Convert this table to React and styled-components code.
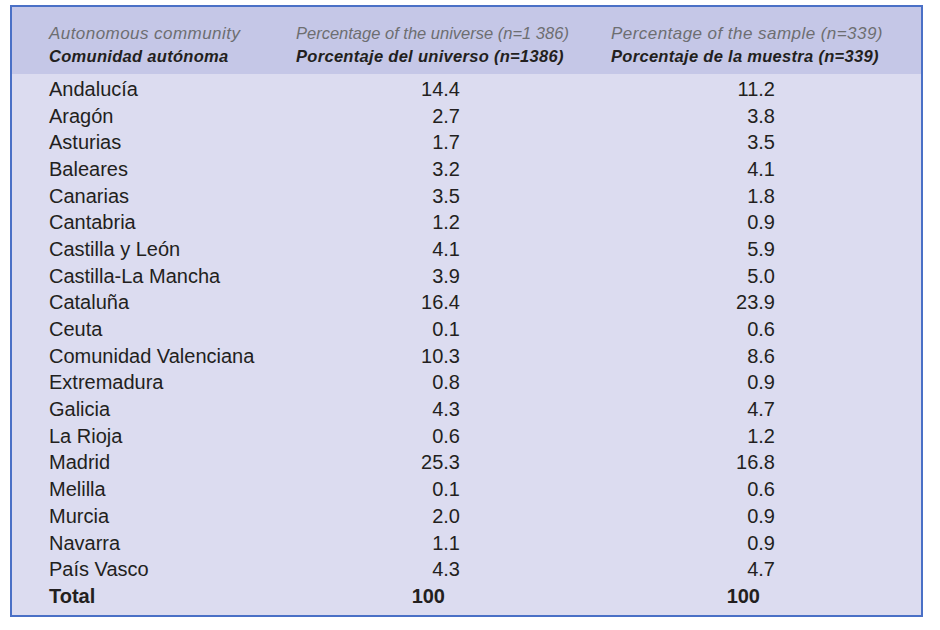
import React from 'react';
import styled, { createGlobalStyle } from 'styled-components';

const rows = [
  ['Andalucía', '14.4', '11.2'],
  ['Aragón', '2.7', '3.8'],
  ['Asturias', '1.7', '3.5'],
  ['Baleares', '3.2', '4.1'],
  ['Canarias', '3.5', '1.8'],
  ['Cantabria', '1.2', '0.9'],
  ['Castilla y León', '4.1', '5.9'],
  ['Castilla-La Mancha', '3.9', '5.0'],
  ['Cataluña', '16.4', '23.9'],
  ['Ceuta', '0.1', '0.6'],
  ['Comunidad Valenciana', '10.3', '8.6'],
  ['Extremadura', '0.8', '0.9'],
  ['Galicia', '4.3', '4.7'],
  ['La Rioja', '0.6', '1.2'],
  ['Madrid', '25.3', '16.8'],
  ['Melilla', '0.1', '0.6'],
  ['Murcia', '2.0', '0.9'],
  ['Navarra', '1.1', '0.9'],
  ['País Vasco', '4.3', '4.7'],
];

const GlobalStyle = createGlobalStyle`
  body {
    margin: 0;
    background: #ffffff;
    font-family: "Liberation Sans", Arial, sans-serif;
  }
`;

const Frame = styled.div`
  margin: 5px 0 0 10px;
  width: 909px;
  border: 2px solid #4a70c6;
  background: #dcdcf0;
`;

const Grid = styled.div`
  display: grid;
  grid-template-columns: 247px 315px 1fr;
  padding-left: 37px;
`;

const Header = styled(Grid)`
  background: #c5c7e7;
  padding-top: 15px;
  padding-bottom: 6px;
`;

const HeadCell = styled.div`
  display: flex;
  flex-direction: column;
  line-height: 23px;
  font-style: italic;
  white-space: nowrap;
`;

/* the universe heading is set tighter than the other two */
const English = styled.span`
  color: #6d6e71;
  font-size: ${p => (p.$tight ? '16.5px' : '17px')};
  letter-spacing: ${p => (p.$tight ? '0' : '0.45px')};
`;

const Spanish = styled.span`
  color: #231f20;
  font-size: 16.5px;
  font-weight: bold;
  letter-spacing: 0.3px;
`;

const Body = styled.div`
  padding: 2px 0 5px;
`;

const Row = styled(Grid)`
  height: 26.7px;
  align-items: center;
  font-size: 20px;
  color: #231f20;
  font-weight: ${p => (p.$total ? 'bold' : 'normal')};
`;

const Name = styled.div`
  white-space: nowrap;
`;

const Value = styled.div`
  width: 164px;
  text-align: right;
  padding-right: ${p => (p.$total ? '15px' : '0')};
  box-sizing: border-box;
`;

export default function App() {
  return (
    <>
      <GlobalStyle />
      <Frame>
        <Header>
          <HeadCell>
            <English>Autonomous community</English>
            <Spanish>Comunidad autónoma</Spanish>
          </HeadCell>
          <HeadCell>
            <English $tight>Percentage of the universe (n=1 386)</English>
            <Spanish>Porcentaje del universo (n=1386)</Spanish>
          </HeadCell>
          <HeadCell>
            <English>Percentage of the sample (n=339)</English>
            <Spanish>Porcentaje de la muestra (n=339)</Spanish>
          </HeadCell>
        </Header>
        <Body>
          {rows.map(([name, universe, sample]) => (
            <Row key={name}>
              <Name>{name}</Name>
              <Value>{universe}</Value>
              <Value>{sample}</Value>
            </Row>
          ))}
          <Row $total>
            <Name>Total</Name>
            <Value $total>100</Value>
            <Value $total>100</Value>
          </Row>
        </Body>
      </Frame>
    </>
  );
}
